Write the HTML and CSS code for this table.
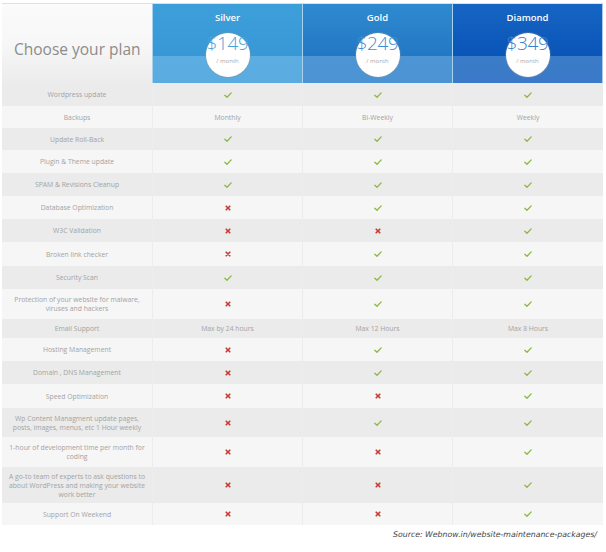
FILE: index.html
```html
<!DOCTYPE html>
<html>
<head>
<meta charset="utf-8">
<link rel="stylesheet" href="styles.css">
</head>
<body>
<div class="page">
  <div class="table">
    <div class="head-label">Choose your plan</div>
    <div class="plan silver">
      <div class="plan-name">Silver</div>
      <div class="circle"><div class="price">$149</div><div class="per">/ month</div></div>
    </div>
    <div class="plan gold">
      <div class="plan-name">Gold</div>
      <div class="circle"><div class="price">$249</div><div class="per">/ month</div></div>
    </div>
    <div class="plan diamond">
      <div class="plan-name">Diamond</div>
      <div class="circle"><div class="price">$349</div><div class="per">/ month</div></div>
    </div>

    <div class="row dark"><div class="c lbl">Wordpress update</div><div class="c"><svg class="yes" viewBox="0 0 8 6"><path d="M0.8 3.3L3 5.2L7.2 0.9"/></svg></div><div class="c"><svg class="yes" viewBox="0 0 8 6"><path d="M0.8 3.3L3 5.2L7.2 0.9"/></svg></div><div class="c"><svg class="yes" viewBox="0 0 8 6"><path d="M0.8 3.3L3 5.2L7.2 0.9"/></svg></div></div>
    <div class="row light"><div class="c lbl">Backups</div><div class="c">Monthly</div><div class="c">Bi-Weekly</div><div class="c">Weekly</div></div>
    <div class="row dark"><div class="c lbl">Update Roll-Back</div><div class="c"><svg class="yes" viewBox="0 0 8 6"><path d="M0.8 3.3L3 5.2L7.2 0.9"/></svg></div><div class="c"><svg class="yes" viewBox="0 0 8 6"><path d="M0.8 3.3L3 5.2L7.2 0.9"/></svg></div><div class="c"><svg class="yes" viewBox="0 0 8 6"><path d="M0.8 3.3L3 5.2L7.2 0.9"/></svg></div></div>
    <div class="row light"><div class="c lbl">Plugin &amp; Theme update</div><div class="c"><svg class="yes" viewBox="0 0 8 6"><path d="M0.8 3.3L3 5.2L7.2 0.9"/></svg></div><div class="c"><svg class="yes" viewBox="0 0 8 6"><path d="M0.8 3.3L3 5.2L7.2 0.9"/></svg></div><div class="c"><svg class="yes" viewBox="0 0 8 6"><path d="M0.8 3.3L3 5.2L7.2 0.9"/></svg></div></div>
    <div class="row dark"><div class="c lbl">SPAM &amp; Revisions Cleanup</div><div class="c"><svg class="yes" viewBox="0 0 8 6"><path d="M0.8 3.3L3 5.2L7.2 0.9"/></svg></div><div class="c"><svg class="yes" viewBox="0 0 8 6"><path d="M0.8 3.3L3 5.2L7.2 0.9"/></svg></div><div class="c"><svg class="yes" viewBox="0 0 8 6"><path d="M0.8 3.3L3 5.2L7.2 0.9"/></svg></div></div>
    <div class="row light"><div class="c lbl">Database Optimization</div><div class="c"><svg class="no" viewBox="0 0 6 6"><path d="M1.2 1.2L4.8 4.8M4.8 1.2L1.2 4.8"/></svg></div><div class="c"><svg class="yes" viewBox="0 0 8 6"><path d="M0.8 3.3L3 5.2L7.2 0.9"/></svg></div><div class="c"><svg class="yes" viewBox="0 0 8 6"><path d="M0.8 3.3L3 5.2L7.2 0.9"/></svg></div></div>
    <div class="row dark"><div class="c lbl">W3C Validation</div><div class="c"><svg class="no" viewBox="0 0 6 6"><path d="M1.2 1.2L4.8 4.8M4.8 1.2L1.2 4.8"/></svg></div><div class="c"><svg class="no" viewBox="0 0 6 6"><path d="M1.2 1.2L4.8 4.8M4.8 1.2L1.2 4.8"/></svg></div><div class="c"><svg class="yes" viewBox="0 0 8 6"><path d="M0.8 3.3L3 5.2L7.2 0.9"/></svg></div></div>
    <div class="row light"><div class="c lbl">Broken link checker</div><div class="c"><svg class="no" viewBox="0 0 6 6"><path d="M1.2 1.2L4.8 4.8M4.8 1.2L1.2 4.8"/></svg></div><div class="c"><svg class="yes" viewBox="0 0 8 6"><path d="M0.8 3.3L3 5.2L7.2 0.9"/></svg></div><div class="c"><svg class="yes" viewBox="0 0 8 6"><path d="M0.8 3.3L3 5.2L7.2 0.9"/></svg></div></div>
    <div class="row dark"><div class="c lbl">Security Scan</div><div class="c"><svg class="yes" viewBox="0 0 8 6"><path d="M0.8 3.3L3 5.2L7.2 0.9"/></svg></div><div class="c"><svg class="yes" viewBox="0 0 8 6"><path d="M0.8 3.3L3 5.2L7.2 0.9"/></svg></div><div class="c"><svg class="yes" viewBox="0 0 8 6"><path d="M0.8 3.3L3 5.2L7.2 0.9"/></svg></div></div>
    <div class="row light"><div class="c lbl">Protection of your website for malware,<br>viruses and hackers</div><div class="c"><svg class="no" viewBox="0 0 6 6"><path d="M1.2 1.2L4.8 4.8M4.8 1.2L1.2 4.8"/></svg></div><div class="c"><svg class="yes" viewBox="0 0 8 6"><path d="M0.8 3.3L3 5.2L7.2 0.9"/></svg></div><div class="c"><svg class="yes" viewBox="0 0 8 6"><path d="M0.8 3.3L3 5.2L7.2 0.9"/></svg></div></div>
    <div class="row dark"><div class="c lbl">Email Support</div><div class="c">Max by 24 hours</div><div class="c">Max 12 Hours</div><div class="c">Max 8 Hours</div></div>
    <div class="row light"><div class="c lbl">Hosting Management</div><div class="c"><svg class="no" viewBox="0 0 6 6"><path d="M1.2 1.2L4.8 4.8M4.8 1.2L1.2 4.8"/></svg></div><div class="c"><svg class="yes" viewBox="0 0 8 6"><path d="M0.8 3.3L3 5.2L7.2 0.9"/></svg></div><div class="c"><svg class="yes" viewBox="0 0 8 6"><path d="M0.8 3.3L3 5.2L7.2 0.9"/></svg></div></div>
    <div class="row dark"><div class="c lbl">Domain , DNS Management</div><div class="c"><svg class="no" viewBox="0 0 6 6"><path d="M1.2 1.2L4.8 4.8M4.8 1.2L1.2 4.8"/></svg></div><div class="c"><svg class="yes" viewBox="0 0 8 6"><path d="M0.8 3.3L3 5.2L7.2 0.9"/></svg></div><div class="c"><svg class="yes" viewBox="0 0 8 6"><path d="M0.8 3.3L3 5.2L7.2 0.9"/></svg></div></div>
    <div class="row light"><div class="c lbl">Speed Optimization</div><div class="c"><svg class="no" viewBox="0 0 6 6"><path d="M1.2 1.2L4.8 4.8M4.8 1.2L1.2 4.8"/></svg></div><div class="c"><svg class="no" viewBox="0 0 6 6"><path d="M1.2 1.2L4.8 4.8M4.8 1.2L1.2 4.8"/></svg></div><div class="c"><svg class="yes" viewBox="0 0 8 6"><path d="M0.8 3.3L3 5.2L7.2 0.9"/></svg></div></div>
    <div class="row dark"><div class="c lbl">Wp Content Managment update pages,<br>posts, images, menus, etc 1 Hour weekly</div><div class="c"><svg class="no" viewBox="0 0 6 6"><path d="M1.2 1.2L4.8 4.8M4.8 1.2L1.2 4.8"/></svg></div><div class="c"><svg class="yes" viewBox="0 0 8 6"><path d="M0.8 3.3L3 5.2L7.2 0.9"/></svg></div><div class="c"><svg class="yes" viewBox="0 0 8 6"><path d="M0.8 3.3L3 5.2L7.2 0.9"/></svg></div></div>
    <div class="row light"><div class="c lbl">1-hour of development time per month for<br>coding</div><div class="c"><svg class="no" viewBox="0 0 6 6"><path d="M1.2 1.2L4.8 4.8M4.8 1.2L1.2 4.8"/></svg></div><div class="c"><svg class="no" viewBox="0 0 6 6"><path d="M1.2 1.2L4.8 4.8M4.8 1.2L1.2 4.8"/></svg></div><div class="c"><svg class="yes" viewBox="0 0 8 6"><path d="M0.8 3.3L3 5.2L7.2 0.9"/></svg></div></div>
    <div class="row dark"><div class="c lbl">A go-to team of experts to ask questions to<br>about WordPress and making your website<br>work better</div><div class="c"><svg class="no" viewBox="0 0 6 6"><path d="M1.2 1.2L4.8 4.8M4.8 1.2L1.2 4.8"/></svg></div><div class="c"><svg class="no" viewBox="0 0 6 6"><path d="M1.2 1.2L4.8 4.8M4.8 1.2L1.2 4.8"/></svg></div><div class="c"><svg class="yes" viewBox="0 0 8 6"><path d="M0.8 3.3L3 5.2L7.2 0.9"/></svg></div></div>
    <div class="row light"><div class="c lbl">Support On Weekend</div><div class="c"><svg class="no" viewBox="0 0 6 6"><path d="M1.2 1.2L4.8 4.8M4.8 1.2L1.2 4.8"/></svg></div><div class="c"><svg class="no" viewBox="0 0 6 6"><path d="M1.2 1.2L4.8 4.8M4.8 1.2L1.2 4.8"/></svg></div><div class="c"><svg class="yes" viewBox="0 0 8 6"><path d="M0.8 3.3L3 5.2L7.2 0.9"/></svg></div></div>
  </div>
  <div class="source">Source: Webnow.in/website-maintenance-packages/</div>
</div>
</body>
</html>
```

FILE: styles.css
```css
html, body {
  margin: 0;
  padding: 0;
  background: #ffffff;
}

.page {
  width: 606px;
  height: 552px;
  padding: 3px 0 0 2px;
  box-sizing: border-box;
}

.table {
  display: grid;
  grid-template-columns: 150px 150px 150px 151px;
  grid-template-rows: 80px 23px 22px 22px 23px 23px 23px 23px 24px 23px 30px 19px 23px 23px 24px 29px 30px 36px 22px;
  font-family: "Open Sans", "Noto Sans", sans-serif;
}

.head-label {
  display: flex;
  align-items: center;
  padding: 11px 0 0 12px;
  font-size: 15.5px;
  color: #8c8c8c;
  background: linear-gradient(to bottom, #fbfbfb 0%, #f7f7f7 50%, #ececec 100%);
  border-top: 1px solid #e2e2e2;
  box-sizing: border-box;
}

.plan {
  display: flex;
  flex-direction: column;
  align-items: center;
  border-top: 1px solid #cfe4f2;
  border-left: 1px solid #a9d2ec;
  box-sizing: border-box;
}

.silver {
  background: linear-gradient(to bottom, #3d9fda 0, #3898d6 52px, #5cade1 52px, #5aabdf 100%);
}

.gold {
  background: linear-gradient(to bottom, #2f8ad0 0, #2378c4 52px, #4d95d5 52px, #4b93d3 100%);
}

.diamond {
  background: linear-gradient(to bottom, #1665c4 0, #0a55b8 52px, #3b7cc9 52px, #3a7ac8 100%);
  border-right: 1px solid #a9c7e6;
}

.plan-name {
  margin-top: 8px;
  height: 12px;
  line-height: 12px;
  font-size: 9.5px;
  font-weight: 600;
  color: #ffffff;
}

.circle {
  margin-top: 9px;
  width: 44px;
  height: 44px;
  border-radius: 50%;
  background: #ffffff;
  box-shadow: 0 0 0 1px rgba(150, 150, 150, 0.35);
  display: flex;
  flex-direction: column;
  align-items: center;
}

.price {
  margin-top: 1px;
  height: 19px;
  font-size: 19px;
  line-height: 19px;
  font-weight: 300;
  letter-spacing: -0.3px;
  white-space: nowrap;
}

.silver .price { color: #4aa2dd; }
.gold .price { color: #3f8ed3; }
.diamond .price { color: #3f80cc; }

.per {
  margin-top: 5px;
  font-size: 6px;
  line-height: 7px;
  color: #a8a8a8;
}

.row {
  display: contents;
}

.c {
  display: flex;
  align-items: center;
  justify-content: center;
  text-align: center;
  font-size: 6.8px;
  line-height: 9px;
  color: #a3a3a3;
  border-left: 1px solid #f3f3f3;
}

.c.lbl {
  border-left: none;
}

.row.dark .c {
  background: #ebebeb;
  border-left-color: #ededed;
}

.row.light .c {
  background: #f6f6f6;
  border-left-color: #ececec;
}

.yes {
  width: 8px;
  height: 6px;
  fill: none;
  stroke: #8cb83f;
  stroke-width: 1.3;
  stroke-linecap: round;
  stroke-linejoin: round;
}

.no {
  width: 6px;
  height: 6px;
  fill: none;
  stroke: #c8392f;
  stroke-width: 1.6;
  stroke-linecap: round;
}

.source {
  margin-top: 5px;
  padding-right: 9px;
  text-align: right;
  font-family: "DejaVu Sans", Verdana, sans-serif;
  font-style: italic;
  font-size: 7.8px;
  color: #444444;
}
```
